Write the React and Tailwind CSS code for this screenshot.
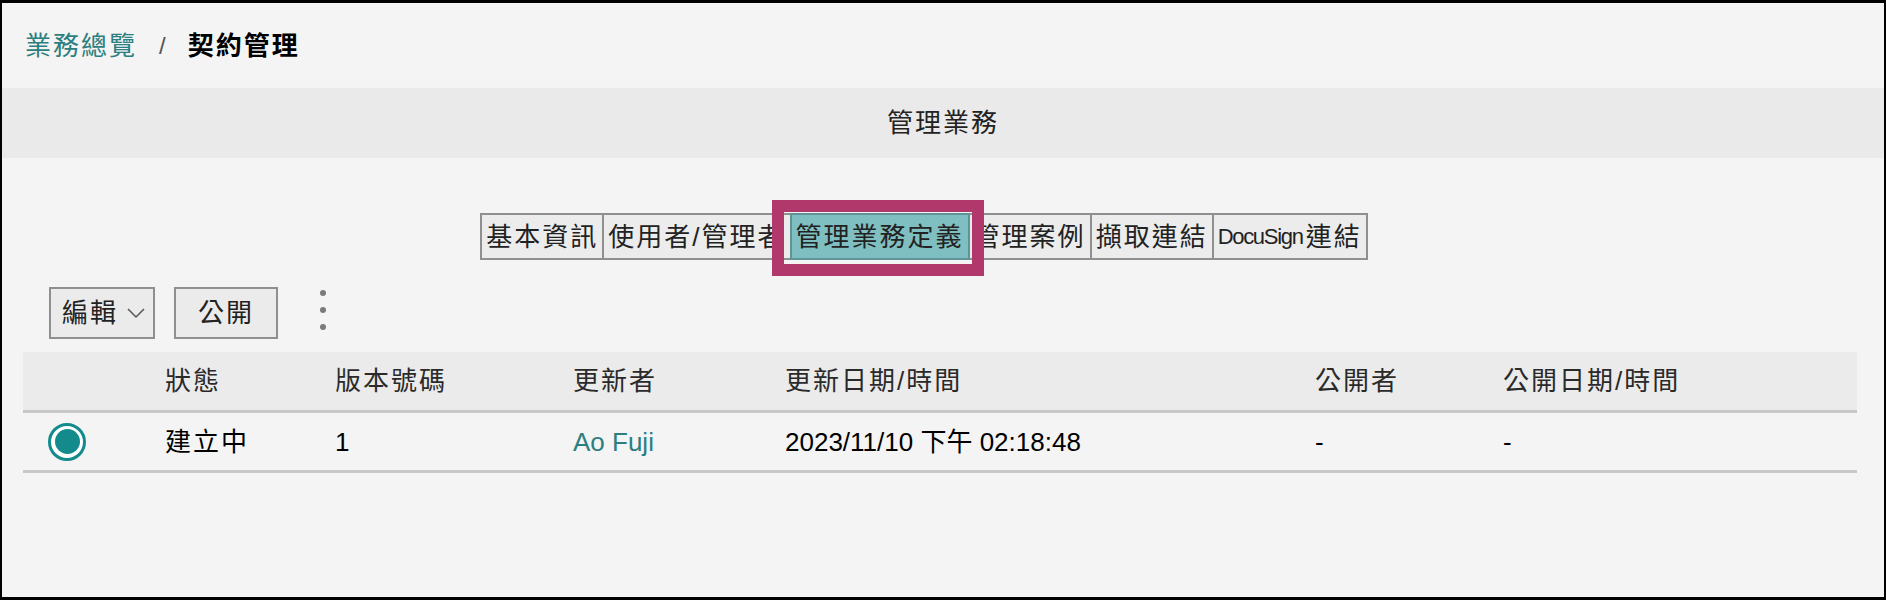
import React from 'react';

const tabs = [
  { label: '基本資訊' },
  { label: '使用者/管理者' },
  { label: '管理業務定義', active: true },
  { label: '管理案例' },
  { label: '擷取連結' },
  { label: '連結', prefix: 'DocuSign' },
];

const headers = ['', '狀態', '版本號碼', '更新者', '更新日期/時間', '公開者', '公開日期/時間'];

export default function App() {
  return (
    <div className="w-[1886px] h-[602px] bg-white">
      <div className="h-[600px] bg-[#f4f4f4] border-black border-x-2 border-t-[3px] border-b-[3px] flex flex-col font-['Liberation_Sans','Noto_Sans_CJK_TC',sans-serif] text-[26px] leading-none text-[#1a1a1a]">
        {/* breadcrumb */}
        <div className="h-[85px] flex items-center pl-[23px] gap-[22px]">
          <span className="text-[#2b7f80] tracking-[2px]">業務總覽</span>
          <span className="text-[#555] text-[24px]">/</span>
          <span className="font-bold tracking-[2px] text-black">契約管理</span>
        </div>

        {/* section title */}
        <div className="h-[70px] bg-[#eaeaea] flex items-center justify-center">
          <span className="tracking-[2px] text-[#222]">管理業務</span>
        </div>

        {/* tabs */}
        <div className="mt-[55px] flex justify-center pr-[38px]">
          <div className="flex">
            {tabs.map((t, i) => (
              <div
                key={t.label}
                className={`relative h-[47px] flex items-center px-[4px] border-2 ${i > 0 ? '-ml-[2px]' : ''} ${
                  t.active
                    ? 'bg-[#80bfc1] border-[#5f9596] z-10'
                    : 'bg-[#ececec] border-[#8f8f8f]'
                }`}
              >
                {t.prefix && (
                  <span className="text-[22px] tracking-[-1.3px] text-[#222] mr-[3px]">{t.prefix}</span>
                )}
                <span className="tracking-[2px] text-[#222]">{t.label}</span>
                {t.active && (
                  <div className="absolute -left-[20px] -right-[16px] -top-[15px] -bottom-[18px] border-[12px] border-[#b0386a] pointer-events-none" />
                )}
              </div>
            ))}
          </div>
        </div>

        {/* toolbar */}
        <div className="mt-[27px] flex items-center pl-[47px] h-[52px]">
          <button className="h-[52px] w-[106px] bg-[#ebebeb] border-2 border-[#8f8f8f] flex items-center pl-[11px] gap-[8px] text-[#222]">
            <span className="tracking-[2px]">編輯</span>
            <svg width="20" height="12" viewBox="0 0 20 12" fill="none">
              <polyline points="2,2 10,10 18,2" stroke="#555" strokeWidth="1.5" />
            </svg>
          </button>
          <button className="ml-[19px] h-[52px] w-[104px] bg-[#ebebeb] border-2 border-[#8f8f8f] flex items-center justify-center text-[#222]">
            <span className="tracking-[2px]">公開</span>
          </button>
          <div className="ml-[42px] flex flex-col gap-[11px] -mt-[6px]">
            <span className="w-[6px] h-[6px] rounded-full bg-[#7a7a7a]" />
            <span className="w-[6px] h-[6px] rounded-full bg-[#7a7a7a]" />
            <span className="w-[6px] h-[6px] rounded-full bg-[#7a7a7a]" />
          </div>
        </div>

        {/* table */}
        <div className="mt-[13px] ml-[21px] mr-[27px]">
          <div className="grid grid-cols-[142px_170px_238px_212px_530px_188px_1fr] h-[61px] bg-[#ebebeb] border-b-[3px] border-[#c8c8c8] items-center text-[#2a2a2a]">
            {headers.map((h, i) => (
              <span key={i} className="tracking-[2px]">{h}</span>
            ))}
          </div>
          <div className="grid grid-cols-[142px_170px_238px_212px_530px_188px_1fr] h-[60px] border-b-[3px] border-[#c8c8c8] items-center text-black">
            <div className="pl-[25px] flex items-center">
              <span className="w-[38px] h-[38px] rounded-full border-[3px] border-[#138a8c] bg-white flex items-center justify-center">
                <span className="w-[25px] h-[25px] rounded-full bg-[#138a8c]" />
              </span>
            </div>
            <span className="tracking-[2px]">建立中</span>
            <span>1</span>
            <span className="text-[#2b7f80]">Ao Fuji</span>
            <span>2023/11/10 下午 02:18:48</span>
            <span>-</span>
            <span>-</span>
          </div>
        </div>
      </div>
    </div>
  );
}
